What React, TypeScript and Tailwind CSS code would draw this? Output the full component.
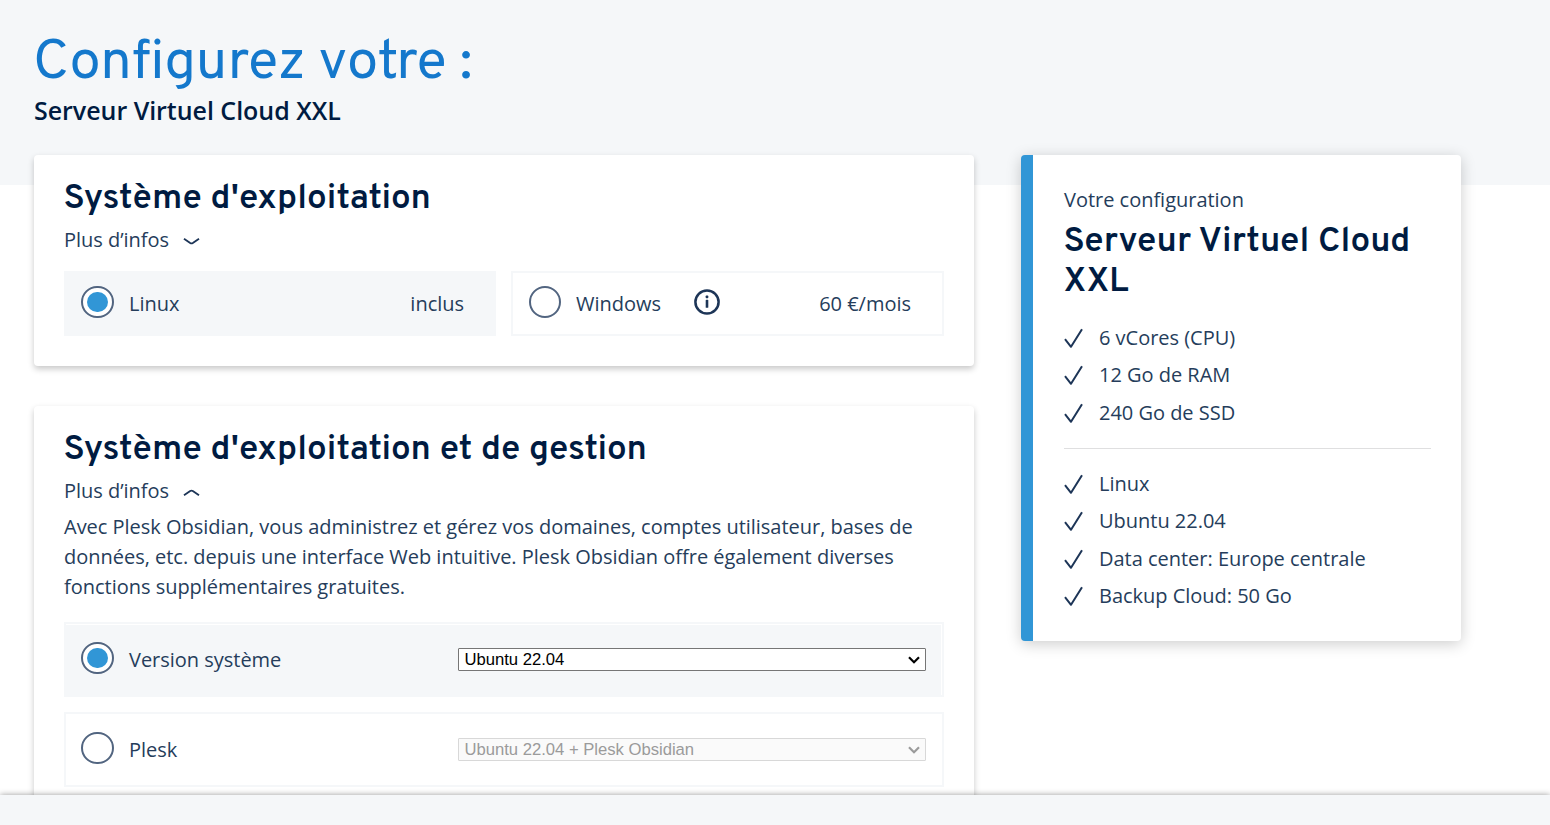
import type { ReactNode } from 'react';

function Radio({ checked = false }: { checked?: boolean }) {
  return (
    <span className="flex h-8 w-full items-center justify-center rounded-full border-2 border-[#526580] bg-white">
      {checked && <span className="h-5 w-[21px] rounded-full bg-[#3196d6]" />}
    </span>
  );
}

function Chevron({ up = false }: { up?: boolean }) {
  return (
    <svg width="17" height="9" viewBox="0 0 17 9" fill="none" stroke="#1d3557" strokeWidth="1.9" className="ml-[14px] mt-[2px]">
      <path d={up ? 'M1 7.2 L7.2 3 Q8.5 2.2 9.8 3 L16 7.2' : 'M1 1.8 L7.2 6 Q8.5 6.8 9.8 6 L16 1.8'} />
    </svg>
  );
}

function MoreInfo({ open = false }: { open?: boolean }) {
  return (
    <button className="flex h-[30px] items-center">
      <span>Plus d’infos</span>
      <Chevron up={open} />
    </button>
  );
}

function InfoIcon() {
  return (
    <svg width="26" height="26" viewBox="0 0 26 26" className="ml-[33px] mb-1">
      <circle cx="13" cy="13" r="11.6" fill="none" stroke="#1d3557" strokeWidth="2.5" />
      <rect x="11.7" y="6.6" width="2.6" height="2.6" rx="0.6" fill="#1d3557" />
      <rect x="11.7" y="10.8" width="2.6" height="8" rx="0.6" fill="#1d3557" />
    </svg>
  );
}

function Heading({ children }: { children: ReactNode }) {
  return (
    <h2 className="-ml-[0.5px] font-[Overpass,Roboto,sans-serif] text-[35px] leading-10 font-semibold tracking-[0.06px] text-[#001b41]">
      {children}
    </h2>
  );
}

function Select({ value, disabled = false }: { value: string; disabled?: boolean }) {
  return (
    <div className="relative w-[468px]">
      <select
        disabled={disabled}
        className={
          disabled
            ? 'block h-[23px] w-full appearance-none rounded-[1px] border border-[#d8d8d8] bg-[#fafafa] pl-[5.5px] font-[Liberation_Sans,Arial,sans-serif] text-[16.67px] leading-[19px] font-normal text-[#9b9b9b] opacity-100'
            : 'block h-[23px] w-full appearance-none rounded-[1px] border border-[#767676] bg-white pl-[5.5px] font-[Liberation_Sans,Arial,sans-serif] text-[16.67px] leading-[19px] font-normal text-black'
        }
      >
        <option>{value}</option>
      </select>
      <svg
        width="12"
        height="8"
        viewBox="0 0 12 8"
        fill="none"
        stroke={disabled ? '#9b9b9b' : '#000'}
        strokeWidth="2.2"
        className="pointer-events-none absolute top-2 right-[6px]"
      >
        <path d="M1 1.2 L6 6.2 L11 1.2" />
      </svg>
    </div>
  );
}

function CheckItem({ children }: { children: ReactNode }) {
  return (
    <li className="flex h-[37.5px] items-center">
      <svg width="20" height="21" viewBox="0 0 20 21" fill="none" stroke="#1d3557" strokeWidth="2" className="mt-px mr-[15px]">
        <path d="M1 11.2 L7 18.8 L18 1.2" strokeLinejoin="round" />
      </svg>
      <span>{children}</span>
    </li>
  );
}

export default function App() {
  return (
    <div className="flex h-[825px] flex-col overflow-hidden bg-white font-[Open_Sans,sans-serif] text-[20px] leading-[30px] font-normal tracking-[-0.018px] text-[#253d5b]">
      <header className="h-[185px] shrink-0 bg-[#f5f7f9] pt-[32px] pl-[33px]">
        <h1 className="font-[Overpass,Roboto,sans-serif] text-[56px] leading-[64px] font-normal tracking-[-0.1px] text-[#1478cc]">
          Configurez votre :
        </h1>
        <p className="pl-px text-[25px] leading-[28px] font-semibold tracking-[-0.03px] text-[#001b41]">Serveur Virtuel Cloud XXL</p>
      </header>

      <main className="-mt-[30px] flex min-h-0 flex-1 items-start gap-[47px] pl-[34px]">
        <div className="flex w-[940px] flex-col gap-10">
          <section className="h-[211px] rounded-[4px] bg-white px-[30px] pt-[24px] shadow-[0_3px_6px_rgba(0,0,0,0.22)]">
            <Heading>Système d'exploitation</Heading>
            <div className="mt-[6px]">
              <MoreInfo />
            </div>
            <div className="mt-4 grid grid-cols-[432px_433px] gap-[15px]">
              <div className="flex h-[65px] items-center bg-[#f5f7f9] pr-8 pl-[17px]">
                <span className="mb-[3px] w-[33px]"><Radio checked /></span>
                <span className="ml-[15px]">Linux</span>
                <span className="ml-auto">inclus</span>
              </div>
              <div className="flex h-[65px] items-center border-2 border-[#f5f7f9] pr-[31px] pl-4">
                <span className="mb-[3px] w-8"><Radio /></span>
                <span className="ml-[15px]">Windows</span>
                <InfoIcon />
                <span className="ml-auto">60 €/mois</span>
              </div>
            </div>
          </section>

          <section className="h-[460px] rounded-[4px] bg-white px-[30px] pt-[24px] shadow-[0_3px_6px_rgba(0,0,0,0.22)]">
            <Heading>Système d'exploitation et de gestion</Heading>
            <div className="mt-[6px]">
              <MoreInfo open />
            </div>
            <p className="mt-[6px]">
              Avec Plesk Obsidian, vous administrez et gérez vos domaines, comptes utilisateur, bases de
              <br />
              données, etc. depuis une interface Web intuitive. Plesk Obsidian offre également diverses
              <br />
              fonctions supplémentaires gratuites.
            </p>
            <div className="mt-5 flex flex-col gap-[15px]">
              <div className="h-[75px] border-2 border-[#f5f7f9] pt-px pr-px">
                <div className="flex h-full items-center bg-[#f5f7f9] pr-[15px] pl-[15px]">
                  <span className="mb-[5px] w-[33px]"><Radio checked /></span>
                  <span className="mb-px ml-[15px]">Version système</span>
                  <span className="mb-px ml-auto"><Select value="Ubuntu 22.04" /></span>
                </div>
              </div>
              <div className="flex h-[75px] items-center border-2 border-[#f5f7f9] pr-4 pl-[15px]">
                <span className="mb-[3px] w-[33px]"><Radio /></span>
                <span className="ml-[15px]">Plesk</span>
                <span className="mb-px ml-auto"><Select value="Ubuntu 22.04 + Plesk Obsidian" disabled /></span>
              </div>
            </div>
          </section>
        </div>

        <aside className="h-[486px] w-[440px] rounded-[4px] border-l-12 border-[#3196d6] bg-white pt-[30px] pr-[30px] pl-[31px] shadow-[0_3px_15px_rgba(0,0,0,0.2)]">
          <p>Votre configuration</p>
          <div className="mt-[7px]">
            <Heading>Serveur Virtuel Cloud<br />XXL</Heading>
          </div>
          <ul className="mt-[17px]">
            <CheckItem>6 vCores (CPU)</CheckItem>
            <CheckItem>12 Go de RAM</CheckItem>
            <CheckItem>240 Go de SSD</CheckItem>
          </ul>
          <hr className="mt-4 border-[#dfdfe0]" />
          <ul className="mt-[16.5px]">
            <CheckItem>Linux</CheckItem>
            <CheckItem>Ubuntu 22.04</CheckItem>
            <CheckItem>Data center: Europe centrale</CheckItem>
            <CheckItem>Backup Cloud: 50 Go</CheckItem>
          </ul>
        </aside>
      </main>

      <footer className="z-10 h-[30px] shrink-0 bg-[#f5f7f9] shadow-[0_0_6px_rgba(0,0,0,0.4)]" />
    </div>
  );
}
